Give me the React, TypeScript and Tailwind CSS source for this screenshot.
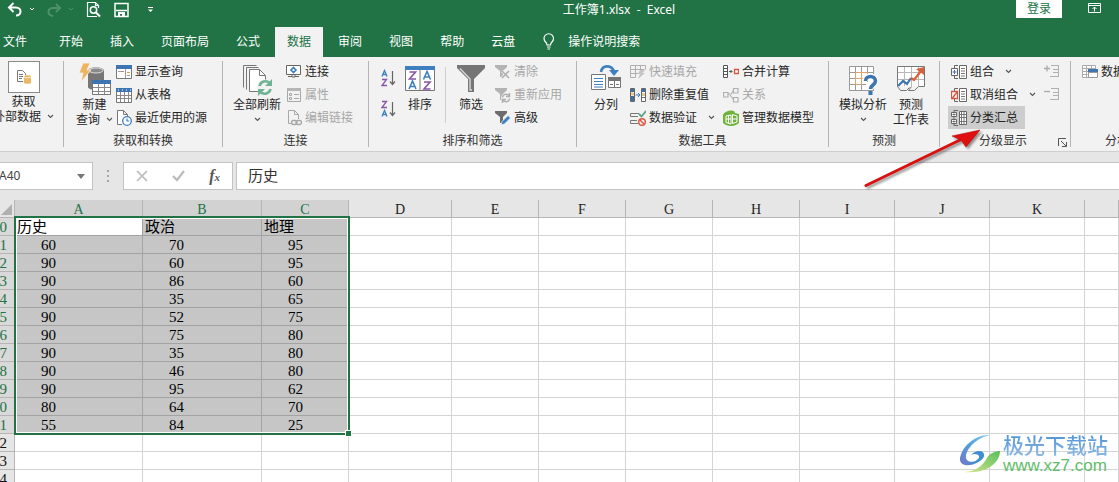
import type { ReactNode } from "react";

const FONT = "font-['Noto_Sans','Noto_Sans_CJK_SC',sans-serif]";

const TABS = ["文件", "开始", "插入", "页面布局", "公式", "数据", "审阅", "视图", "帮助", "云盘"];

const COLUMNS = ["A", "B", "C", "D", "E", "F", "G", "H", "I", "J", "K", "L"];
const COLUMN_WIDTHS = [
  "w-[128px]",
  "w-[119px]",
  "w-[87px]",
  "w-[103px]",
  "w-[87px]",
  "w-[87px]",
  "w-[87px]",
  "w-[87px]",
  "w-[95px]",
  "w-[95px]",
  "w-[95px]",
  "",
];

const FIRST_ROW = 40;
const ROWS: string[][] = [
  ["历史", "政治", "地理"],
  ["60", "70", "95"],
  ["90", "60", "95"],
  ["90", "86", "60"],
  ["90", "35", "65"],
  ["90", "52", "75"],
  ["90", "75", "80"],
  ["90", "35", "80"],
  ["90", "46", "80"],
  ["90", "95", "62"],
  ["80", "64", "70"],
  ["55", "84", "25"],
  [],
  [],
  [],
];
const SELECTED_ROWS = 12;
const SELECTED_COLS = 3;

function Svg({ w = 16, h = 16, children }: { w?: number; h?: number; children: ReactNode }) {
  return (
    <svg width={w} height={h} viewBox={`0 0 ${w} ${h}`} fill="none" className="shrink-0" aria-hidden="true">
      {children}
    </svg>
  );
}

function Chevron() {
  return (
    <Svg w={7} h={5}>
      <path d="M1 1l2.5 2.5L6 1" stroke="#555" strokeWidth="1.1" />
    </Svg>
  );
}

/* ---------- small ribbon icons ---------- */

const ShowQueriesIcon = () => (
  <Svg>
    <path d="M.5 1.5h15v13H.5z" fill="#fff" stroke="#777" />
    <path d="M0 1h16v4H0z" fill="#3e74b0" />
    <path d="M9.5 5v9M2 7.5h6M11 11.5h3" stroke="#999" />
    <path d="M11 8.5h3" stroke="#e0a04a" />
  </Svg>
);

const FromTableIcon = () => (
  <Svg>
    <path d="M.5 1.5h15v14H.5z" fill="#fff" stroke="#777" />
    <path d="M0 1h16v4H0z" fill="#3e74b0" />
    <path d="M2 3h1M6 3h1M10 3h1M14 3h1" stroke="#fff" />
    <path d="M4.5 5v10M8.5 5v10M12.5 5v10M1 8.5h14M1 11.5h14" stroke="#888" />
  </Svg>
);

const RecentIcon = () => (
  <Svg>
    <path d="M6 14.5H1.5V.5h6l4 4V7M7.5.5v4h4" fill="#fff" stroke="#777" />
    <circle cx="11" cy="11" r="4.3" fill="#fff" stroke="#3e7fc0" strokeWidth="1.3" />
    <path d="M11 8.5V11h2.3" stroke="#3e7fc0" strokeWidth="1.2" />
  </Svg>
);

const ConnectionIcon = () => (
  <Svg>
    <path d="M.5 1.5h14v9H.5z" fill="#fff" stroke="#666" />
    <path d="M2 12.5h4M9 12.5h4M6 11v2h3v-2" stroke="#666" />
    <path d="M7.5 3.5l2.5 2.5-2.5 2.5L5 6z" stroke="#3e7fc0" strokeWidth="1.6" />
  </Svg>
);

const PropertiesIcon = () => (
  <Svg>
    <path d="M1.5 1.5h13v13h-13z" stroke="#a8a8a8" />
    <path d="M1 1h14v3H1z" fill="#b5b5b5" />
    <path d="M8 7.5h5M8 11.5h5M3.5 6.5h2v2h-2zM3.5 10.5h2v2h-2z" stroke="#a8a8a8" />
  </Svg>
);

const EditLinksIcon = () => (
  <Svg>
    <path d="M5 13.5H2.5v-13h6l4 4V9M8.5.5v4h4" stroke="#a8a8a8" />
    <rect x="5.5" y="10.5" width="5.5" height="4" rx="2" stroke="#a8a8a8" strokeWidth="1.4" />
    <rect x="10" y="10.5" width="5.5" height="4" rx="2" stroke="#a8a8a8" strokeWidth="1.4" />
  </Svg>
);

const ClearFilterIcon = () => (
  <Svg>
    <path d="M0 1h12v2L8 7v6H5V7L0 3z" fill="#b3b3b3" />
    <path d="M7 7l7 7M14 7l-7 7" stroke="#f2f2f2" strokeWidth="3" />
    <path d="M7 7l7 7M14 7l-7 7" stroke="#adadad" strokeWidth="1.5" />
  </Svg>
);

const ReapplyIcon = () => (
  <Svg>
    <path d="M0 1h12v2L8 7v6H5V7L0 3z" fill="#b3b3b3" />
    <circle cx="11" cy="11" r="5" fill="#f2f2f2" />
    <path
      d="M7.5 10.5a3.5 3.5 0 0 1 6.5-1.500M14.5 11.5a3.5 3.5 0 0 1-6.5 1.500M14.5 6v3.500h-3.500M7.5 16v-3.500h3.500"
      stroke="#adadad"
      strokeWidth="1.4"
    />
  </Svg>
);

const AdvancedIcon = () => (
  <Svg>
    <path d="M0 1h12v2L8 7v6H5V7L0 3z" fill="#6c6c6c" />
    <path d="M13 5.5l2.500 2.500-6 6-3.500 1 1-3.500z" fill="#3e7fc0" stroke="#f2f2f2" strokeWidth=".8" />
  </Svg>
);

const FlashFillIcon = () => (
  <Svg>
    <path d="M.5 1.5h15v4M.5 1.5v12h5M.5 5.5h14M.5 9.5h8M5.5 1.5v12M10.5 1.5v5" stroke="#b0b0b0" />
    <path d="M10 6h5l-2.500 3H15l-7 6 2-5H8z" fill="#c4c4c4" />
  </Svg>
);

const RemoveDuplicatesIcon = () => (
  <Svg>
    <path d="M.5 1.5h4v13h-4zM11.5 1.5h4v13h-4z" fill="#fff" stroke="#666" />
    <path d="M1 2h3v3H1zM1 9h3v5H1zM12 2h3v3h-3z" fill="#3e6f9e" />
    <path d="M1 5.5h3v3H1zM12 6h3v3h-3z" fill="#e5c88f" />
    <path d="M11 10.5h5" stroke="#666" />
    <path d="M5.5 8h4M8 6l2 2-2 2" stroke="#3e7fc0" />
  </Svg>
);

const ValidationIcon = () => (
  <Svg>
    <path d="M9 3.5H.5v3H8M7 10.5H.5v3H8" stroke="#777" />
    <path d="M9 4l2.500 2.500L16 1" stroke="#5b9f86" strokeWidth="1.8" />
    <circle cx="12" cy="12" r="3.3" stroke="#d9553f" strokeWidth="1.4" />
    <path d="M9.8 9.8l4.4 4.4" stroke="#d9553f" strokeWidth="1.4" />
  </Svg>
);

const ConsolidateIcon = () => (
  <Svg>
    <path d="M.5 1.5h4v12h-4zM.5 4.5h4M.5 7.5h4M.5 10.5h4" fill="#fff" stroke="#555" />
    <path d="M6 7.5h3M7.5 6L9 7.5 7.500 9" stroke="#555" />
    <path d="M11.5 5.5h4v4h-4z" fill="#fff" stroke="#d9553f" strokeWidth="1.3" />
  </Svg>
);

const RelationsIcon = () => (
  <Svg>
    <path
      d="M.5 5.5h4.500v4.500H.5zM10.5 1.5H15V6h-4.500zM10.5 10.5H15V15h-4.500zM5 7h3l2.500-3.500M7 8l3.500 4.500"
      stroke="#b0b0b0"
      strokeWidth="1.2"
    />
  </Svg>
);

const DataModelIcon = () => (
  <Svg>
    <path d="M0 4.500C2 2 5 .5 8 .5s4 1 4 2.500l4 1v9c-2 2-5 3-8 3s-6-1-8-3z" fill="#70b33c" />
    <path d="M3 6l5-1v9l-5-1.500zM3 9h5M5.500 5.500v8M9.500 4.500L14 6v6l-4.500 1.500zM9.500 9H14" stroke="#fff" />
  </Svg>
);

const GroupIcon = () => (
  <Svg>
    <path d="M7 1.500H3.500V4M7 14.500H3.500V12" stroke="#666" />
    <path d="M.5 4.500h6v7h-6z" fill="#fff" stroke="#666" />
    <path d="M1.500 8h4M3.500 6v4" stroke="#3e74b0" />
    <path d="M8.500 1.500h7v13h-7z" fill="#fff" stroke="#666" />
    <path d="M10 4.500h4M10 7h4M10 9.500h4M10 12h4" stroke="#777" />
  </Svg>
);

const UngroupIcon = () => (
  <Svg>
    <path d="M7 1.500H3.500V4M7 14.500H3.500V12" stroke="#666" />
    <path d="M.5 4.500h6v7h-6z" fill="#fff" stroke="#d9553f" strokeWidth="1.3" />
    <path d="M1.500 11L6 5" stroke="#d9553f" strokeWidth="1.4" />
    <path d="M8.500 1.500h7v13h-7z" fill="#fff" stroke="#666" />
    <path d="M10 4.500h4M10 7h4M10 9.500h4M10 12h4" stroke="#777" />
  </Svg>
);

const SubtotalIcon = () => (
  <Svg>
    <path d="M.5 2.500h5v4h-5zM.5 9.500h5v4h-5z" fill="#fff" stroke="#666" />
    <path d="M1.500 4.500h3M3 3.500v2M1.500 11.500h3M3 10.500v2M3 2V.5h4M3 7v2M3 14v1.500h4" stroke="#666" />
    <path d="M8.500 1.500h7v13h-7z" fill="#fff" stroke="#666" />
    <path d="M10.500 2v12M13 2v12M9 4.500h6M9 7.500h6M9 11.500h6" stroke="#777" />
  </Svg>
);

const DetailIcon = ({ plus = false }: { plus?: boolean }) => (
  <Svg>
    <path d={plus ? "M0 4.500h6M3 1.500v6" : "M0 4.500h6"} stroke="#aaa" strokeWidth="1.3" />
    <path d="M7 1.500h8M9 5.500h6M9 8.500h6M6 12.500h9M14.500 1v12" stroke="#b0b0b0" />
  </Svg>
);

const AnalysisIcon = () => (
  <Svg>
    <path d="M.5 1.500h13v12H.5zM.5 4.500h13M.5 7.500h13M.5 10.500h5M4.500 1.500v12M9.500 1.500v3" fill="#fff" stroke="#aaa" />
    <path d="M6 5h10v4H6z" fill="#3e74b0" />
    <path d="M6.500 8.500h9v5h-9z" fill="#fff" stroke="#999" />
  </Svg>
);

/* ---------- large ribbon icons ---------- */

const ExternalDataIcon = () => (
  <span className="flex size-8 items-center justify-center border border-[#8a8a8a] bg-white">
    <Svg>
      <path d="M7 12.500H1.500v-11h5l3 3V6M3 5.500h4M3 7.500h4M3 9.500h3" stroke="#777" />
      <path d="M8 7c0-1 7-1 7 0v7c0 1-7 1-7 0z" fill="#eab765" />
      <path d="M8 8c1 1 6 1 7 0" stroke="#fff" strokeWidth=".8" />
    </Svg>
  </span>
);

const NewQueryIcon = () => (
  <Svg w={34} h={34}>
    <path d="M10 8c0-5 16-5 16 0v16c0 4-16 4-16 0z" fill="#777" />
    <ellipse cx="18" cy="7.500" rx="7" ry="2.500" fill="#8b8b8b" stroke="#f2f2f2" strokeWidth=".8" />
    <path d="M5 0h7L9 7h4L3 19l2-9H1z" fill="#efb45f" stroke="#f2f2f2" strokeWidth=".8" />
    <path d="M14.500 17.500h18v14h-18z" fill="#fff" stroke="#777" />
    <path d="M14 17h19v4H14z" fill="#3e74b0" />
    <path d="M20.500 21v10M26.500 21v10M15 24.500h17M15 28.500h17" stroke="#888" />
  </Svg>
);

const RefreshAllIcon = () => (
  <Svg w={32} h={32}>
    <path d="M2.500 23.500V1.500h13M5.500 25.500V3.500h12" stroke="#777" />
    <path d="M8.500 5.500h10l6 6v16h-16z" fill="#fff" stroke="#777" />
    <path d="M18.500 5.500v6h6" stroke="#777" />
    <circle cx="24" cy="23.500" r="8" fill="#f2f2f2" />
    <path d="M18.500 22a6 6 0 0 1 10-3M29.500 25a6 6 0 0 1-10 3" stroke="#6fb295" strokeWidth="2.6" />
    <path d="M31 15v7h-7zM17 32v-7h7z" fill="#6fb295" />
  </Svg>
);

const SortIcon = () => (
  <Svg w={30} h={32}>
    <path d="M.5 2.500h29v24H.5z" fill="#fff" stroke="#777" />
    <path d="M0 2h30v4H0z" fill="#3e7fc0" />
    <path d="M15 6v20" stroke="#777" />
    <path d="M4.500 8h6l-6 7h6.500" stroke="#8a55a5" strokeWidth="1.6" />
    <path d="M4 25l3.500-8 3.500 8M5 22.500h5" stroke="#3e7fc0" strokeWidth="1.6" />
    <path d="M18.500 15.500l3.500-8 3.500 8M19.500 13h5" stroke="#3e7fc0" strokeWidth="1.6" />
    <path d="M19 18h6l-6 7h6.500" stroke="#8a55a5" strokeWidth="1.6" />
  </Svg>
);

const SortOrderIcon = ({ desc = false }: { desc?: boolean }) => (
  <Svg w={15} h={18}>
    <g transform={desc ? "translate(0 9)" : undefined}>
      <path d="M1 7.500L3.500 1.500 6 7.500M2 5.500h3" stroke="#3e7fc0" strokeWidth="1.3" />
    </g>
    <g transform={desc ? "translate(0 -9)" : undefined}>
      <path d="M1 10.500h4.500L1 16.500h5" stroke="#8a55a5" strokeWidth="1.3" />
    </g>
    <path d="M11.500 2v13M9 12.500l2.500 3 2.500-3" stroke="#666" strokeWidth="1.2" />
  </Svg>
);

const FilterIcon = () => (
  <Svg w={28} h={32}>
    <path d="M0 1h28v3L17 15v13h-6V15L0 4z" fill="#757575" />
    <path d="M3 4.500l10 10.500v11h2" stroke="#d8d8d8" strokeWidth="1.4" />
  </Svg>
);

const TextToColumnsIcon = () => (
  <Svg w={30} h={32}>
    <path d="M10 8C11 1 21 0 23 8" stroke="#3e7fc0" strokeWidth="2.6" />
    <path d="M18 6h10l-5 6z" fill="#3e7fc0" />
    <path d="M.5 10.500h14v15H.5z" fill="#fff" stroke="#777" />
    <path d="M3 14.500h9M3 17.500h9M3 20.500h9M3 23h9" stroke="#3e7fc0" />
    <path d="M17.500 13.500h12v10h-12z" fill="#fff" stroke="#777" />
    <path d="M17 13h13v4H17z" fill="#757575" />
    <path d="M23.500 17v6M19 20.500h3M25 20.500h3" stroke="#777" />
  </Svg>
);

const WhatIfIcon = () => (
  <Svg w={30} h={32}>
    <path
      d="M1.500 2.500h24v24h-24zM7.500 2v25M13.500 2v25M19.500 2v16M1 8.500h25M1 14.500h19M1 20.500h17"
      fill="#fff"
      stroke="#999"
    />
    <path d="M7.500 8.500h6v6h-6zM7.500 14.500h6v6h-6zM13.500 8.500h6v6h-6z" stroke="#e3a567" />
    <path d="M17.500 17c0-6 10-6 10 0 0 4-5 4-5 8" stroke="#fff" strokeWidth="6" />
    <path d="M17.500 17c0-6 10-6 10 0 0 4-5 4-5 8" stroke="#3e74b0" strokeWidth="3.6" />
    <path d="M20.500 27h4v4h-4z" fill="#3e74b0" />
  </Svg>
);

const ForecastIcon = () => (
  <Svg w={30} h={32}>
    <path d="M1.500 2.500h27v20h-27z" fill="#fff" />
    <path d="M8.500 2v20M15.500 2v20M22.500 2v20M1 8.500h28M1 15.500h28" stroke="#b8b8b8" />
    <path d="M1.500 2.500v20l3 4h6l3-3M28.500 2.500v20h-6l-4 4h-6l3-4M1.500 2.500h27" stroke="#777" />
    <path d="M2 22l5-5 4 3 4-6" stroke="#3e74b0" strokeWidth="2.2" />
    <path d="M15 14l3 2 7-9" stroke="#d9603b" strokeWidth="2.2" />
    <path d="M20 5l8-2v8z" fill="#d9603b" />
  </Svg>
);

/* ---------- ribbon building blocks ---------- */

type SmallButtonProps = {
  icon: ReactNode;
  label: string;
  arrow?: boolean;
  disabled?: boolean;
  active?: boolean;
};

function SmallButton({ icon, label, arrow, disabled, active }: SmallButtonProps) {
  return (
    <button
      type="button"
      disabled={disabled}
      className={`flex h-[23px] items-center gap-[3px] px-[3px] text-[12px] leading-4 whitespace-nowrap ${
        disabled ? "text-[#a6a6a6]" : "text-[#262626]"
      } ${active ? "bg-[#cdcdcd] pr-[7px]" : ""}`}
    >
      {icon}
      {label}
      {arrow && (
        <span className="ml-2">
          <Chevron />
        </span>
      )}
    </button>
  );
}

type LargeButtonProps = {
  icon: ReactNode;
  lines: string[];
  arrow?: "beside" | "below";
  className?: string;
};

function LargeButton({ icon, lines, arrow, className = "pt-1" }: LargeButtonProps) {
  const last = lines.length - 1;
  return (
    <button
      type="button"
      className={`flex shrink-0 flex-col items-center text-[12px] leading-[15px] whitespace-nowrap text-[#262626] ${className}`}
    >
      <span className="mb-px flex h-8 items-center justify-center">{icon}</span>
      {lines.map((line, i) => (
        <span key={line} className="flex h-[15px] items-center gap-[6px]">
          {line}
          {arrow === "beside" && i === last && <Chevron />}
        </span>
      ))}
      {arrow === "below" && (
        <span className="flex h-[15px] items-center">
          <Chevron />
        </span>
      )}
    </button>
  );
}

type GroupProps = {
  label: string;
  width: string;
  launcher?: boolean;
  children: ReactNode;
};

function Group({ label, width, launcher, children }: GroupProps) {
  return (
    <>
      <section aria-label={label || undefined} className={`flex shrink-0 flex-col pt-[3px] ${width}`}>
        <div className="flex h-[70px]">{children}</div>
        <div className="flex h-[21px] items-center text-[12px] leading-4 whitespace-nowrap text-[#333]">
          <span className={`flex-1 text-center ${launcher ? "pl-2" : ""}`}>{label}</span>
          {launcher && (
            <button type="button" aria-label={`${label}设置`} className="mt-1 mr-[3px]">
              <Svg w={9} h={9}>
                <path d="M.5 8V.5H8M3 3l5 5M8.500 4v4.500H4" stroke="#555" />
              </Svg>
            </button>
          )}
        </div>
      </section>
      <div className="my-1 w-px shrink-0 bg-[#b5b5b5]" />
    </>
  );
}

function TitleBar() {
  return (
    <header className="flex h-[27px] items-start text-[12px] leading-[18px] text-white">
      <div className="flex h-[19px] items-center pl-[7px]">
        <button type="button" aria-label="撤消">
          <Svg w={16} h={15}>
            <path d="M2 5.500h7c6 0 6 8 0 8M6.500 1L2 5.500 6.500 10" stroke="#fff" strokeWidth="2" />
          </Svg>
        </button>
        <button type="button" aria-label="撤消选项" className="ml-[6px]">
          <Svg w={6} h={5}>
            <path d="M1 1l2 2 2-2" stroke="#fff" />
          </Svg>
        </button>
        <button type="button" disabled aria-label="恢复" className="ml-3">
          <Svg w={15} h={14}>
            <path d="M13 5H6c-6 0-6 7 0 8M9 1l4 4-4 4" stroke="#4d9069" strokeWidth="2" />
          </Svg>
        </button>
        <button type="button" disabled aria-label="恢复选项" className="ml-[6px]">
          <Svg w={6} h={5}>
            <path d="M1 1l2 2 2-2" stroke="#4d9069" />
          </Svg>
        </button>
        <button type="button" aria-label="打印预览" className="ml-3">
          <Svg w={16} h={17}>
            <path d="M11 15.500H1.500V1.500h8l3 3V7M9.500 1.500v3h3" stroke="#fff" strokeWidth="1.2" />
            <circle cx="7.500" cy="9" r="3.200" stroke="#fff" strokeWidth="1.5" />
            <path d="M10 11.500l4 4" stroke="#fff" strokeWidth="2" />
          </Svg>
        </button>
        <button type="button" aria-label="保存" className="ml-3">
          <Svg w={15} h={16}>
            <path d="M1 1.500h13v13H1z" stroke="#fff" strokeWidth="1.5" />
            <path d="M2 8.500h11" stroke="#fff" strokeWidth="1.5" />
            <path d="M4 10h7v5H8v-3H6v3H4z" fill="#fff" />
          </Svg>
        </button>
        <button type="button" aria-label="自定义快速访问工具栏" className="ml-[18px]">
          <Svg w={7} h={7}>
            <path d="M1 1.500h5" stroke="#fff" />
            <path d="M1 3.500h5L3.500 6z" fill="#fff" />
          </Svg>
        </button>
      </div>
      <h1 className="flex-1 pt-px pl-[68px] text-center whitespace-pre">{"工作簿1.xlsx  -  Excel"}</h1>
      <button type="button" className="h-[18px] bg-white px-[11px] text-[#217346]">
        登录
      </button>
      <button type="button" aria-label="功能区显示选项" className="mt-[2px] mr-[17px] ml-[25px]">
        <Svg w={15} h={12}>
          <path d="M1.500 1.500h12v9h-12zM1 3.500h13M7.500 9.500V5M5.500 7l2-2 2 2" stroke="#fff" />
        </Svg>
      </button>
    </header>
  );
}

function TabBar() {
  return (
    <nav className="flex h-[30px] items-stretch gap-[3px] text-[12px] leading-4 whitespace-nowrap text-white">
      {TABS.map((tab) => (
        <button
          key={tab}
          type="button"
          className={`pb-px ${tab === "文件" ? "mr-[5px] pr-3 pl-[3px]" : "px-3"} ${
            tab === "数据" ? "bg-[#f2f2f2] text-[#217346]" : ""
          }`}
        >
          {tab}
        </button>
      ))}
      <button type="button" className="flex items-center gap-3 px-3 pb-px">
        <Svg w={14} h={17}>
          <path
            d="M5 12c0-3-3-3-3-6.500a4.700 4.700 0 0 1 9.500 0C11.500 9 8.500 9 8.500 12zM5 14h3.500M5.500 16h2.500"
            stroke="#fff"
            strokeWidth="1.2"
          />
        </Svg>
        操作说明搜索
      </button>
    </nav>
  );
}

function Ribbon() {
  return (
    <div className="flex overflow-hidden border-b border-[#cfcfcf] bg-[#f2f2f2]">
      <Group label="" width="w-[63px]">
        <LargeButton icon={<ExternalDataIcon />} lines={["获取", "外部数据"]} arrow="beside" className="-ml-2 w-[63px] pt-px" />
      </Group>

      <Group label="获取和转换" width="w-[158px]">
        <div className="flex pl-3">
          <LargeButton icon={<NewQueryIcon />} lines={["新建", "查询"]} arrow="beside" />
          <div>
            <SmallButton icon={<ShowQueriesIcon />} label="显示查询" />
            <SmallButton icon={<FromTableIcon />} label="从表格" />
            <SmallButton icon={<RecentIcon />} label="最近使用的源" />
          </div>
        </div>
      </Group>

      <Group label="连接" width="w-[145px]">
        <div className="flex pl-[10px]">
          <LargeButton icon={<RefreshAllIcon />} lines={["全部刷新"]} arrow="below" />
          <div className="ml-[2px]">
            <SmallButton icon={<ConnectionIcon />} label="连接" />
            <SmallButton icon={<PropertiesIcon />} label="属性" disabled />
            <SmallButton icon={<EditLinksIcon />} label="编辑链接" disabled />
          </div>
        </div>
      </Group>

      <Group label="排序和筛选" width="w-[207px]">
        <div className="flex pl-3">
          <div className="flex flex-col gap-[13px] pt-[9px]">
            <button type="button" aria-label="升序">
              <SortOrderIcon />
            </button>
            <button type="button" aria-label="降序">
              <SortOrderIcon desc />
            </button>
          </div>
          <LargeButton icon={<SortIcon />} lines={["排序"]} className="ml-[9px] pt-1" />
          <div className="mt-[7px] ml-[10px] h-[56px] w-px bg-[#cfcfcf]" />
          <LargeButton icon={<FilterIcon />} lines={["筛选"]} className="ml-[11px] pt-1" />
          <div className="ml-[7px]">
            <SmallButton icon={<ClearFilterIcon />} label="清除" disabled />
            <SmallButton icon={<ReapplyIcon />} label="重新应用" disabled />
            <SmallButton icon={<AdvancedIcon />} label="高级" />
          </div>
        </div>
      </Group>

      <Group label="数据工具" width="w-[251px]">
        <div className="flex pl-[14px]">
          <LargeButton icon={<TextToColumnsIcon />} lines={["分列"]} />
          <div className="ml-[6px]">
            <SmallButton icon={<FlashFillIcon />} label="快速填充" disabled />
            <SmallButton icon={<RemoveDuplicatesIcon />} label="删除重复值" />
            <SmallButton icon={<ValidationIcon />} label="数据验证" arrow />
          </div>
          <div className="ml-[2px]">
            <SmallButton icon={<ConsolidateIcon />} label="合并计算" />
            <SmallButton icon={<RelationsIcon />} label="关系" disabled />
            <SmallButton icon={<DataModelIcon />} label="管理数据模型" />
          </div>
        </div>
      </Group>

      <Group label="预测" width="w-[110px]">
        <div className="flex gap-[6px] pl-[10px]">
          <LargeButton icon={<WhatIfIcon />} lines={["模拟分析"]} arrow="below" />
          <LargeButton icon={<ForecastIcon />} lines={["预测", "工作表"]} />
        </div>
      </Group>

      <Group label="分级显示" width="w-[130px]" launcher>
        <div className="flex flex-1 justify-between pr-[6px] pl-2">
          <div>
            <SmallButton icon={<GroupIcon />} label="组合" arrow />
            <SmallButton icon={<UngroupIcon />} label="取消组合" arrow />
            <SmallButton icon={<SubtotalIcon />} label="分类汇总" active />
          </div>
          <div>
            <button type="button" disabled aria-label="显示明细数据" className="flex h-[23px] items-center px-1">
              <DetailIcon plus />
            </button>
            <button type="button" disabled aria-label="隐藏明细数据" className="flex h-[23px] items-center px-1">
              <DetailIcon />
            </button>
          </div>
        </div>
      </Group>

      <Group label="分析" width="w-[92px]">
        <div className="pl-2">
          <SmallButton icon={<AnalysisIcon />} label="数据分析" />
        </div>
      </Group>
    </div>
  );
}

function FormulaBar() {
  return (
    <div className="flex h-12 items-start bg-[#e6e6e6] pt-[10px]">
      <div className="flex h-7 w-[93px] shrink-0 items-center border border-l-0 border-[#c3c3c3] bg-white">
        <input aria-label="名称框" defaultValue="A40" className="-ml-px w-[78px] text-[12px] text-[#444] outline-none" />
        <button type="button" aria-label="名称列表">
          <Svg w={8} h={5}>
            <path d="M0 0h8L4 5z" fill="#777" />
          </Svg>
        </button>
      </div>
      <div className="flex h-7 w-[30px] shrink-0 flex-col items-center justify-center gap-[3px]">
        <span className="size-[2px] bg-[#a5a5a5]" />
        <span className="size-[2px] bg-[#a5a5a5]" />
        <span className="size-[2px] bg-[#a5a5a5]" />
      </div>
      <div className="flex h-7 w-[110px] shrink-0 items-center justify-between border border-[#c3c3c3] bg-white px-3">
        <button type="button" aria-label="取消">
          <Svg w={12} h={12}>
            <path d="M1 1l10 10M11 1L1 11" stroke="#bbb" strokeWidth="1.7" />
          </Svg>
        </button>
        <button type="button" aria-label="输入">
          <Svg w={13} h={12}>
            <path d="M1 6l4 4 7-9" stroke="#bbb" strokeWidth="2.2" />
          </Svg>
        </button>
        <button
          type="button"
          aria-label="插入函数"
          className="font-['Liberation_Serif',serif] text-[16px] leading-5 font-bold text-[#555] italic"
        >
          f<span className="text-[11px]">x</span>
        </button>
      </div>
      <input
        aria-label="编辑栏"
        defaultValue="历史"
        className="ml-[3px] h-7 min-w-0 flex-1 border border-r-0 border-[#c3c3c3] bg-white pb-1 pl-[11px] text-[15px] text-[#333] outline-none"
      />
    </div>
  );
}

function cellStyle(row: number, col: number) {
  if (row < SELECTED_ROWS && col < SELECTED_COLS) {
    return row === 0 && col === 0 ? "bg-white border-[#a3a3a3]" : "bg-[#c6c6c6] border-[#a3a3a3]";
  }
  return "bg-white border-[#d4d4d4]";
}

function Sheet() {
  return (
    <div className="relative">
      <table className="w-full table-fixed border-separate border-spacing-0 text-[15px]">
        <colgroup>
          <col className="w-[15px]" />
          {COLUMNS.map((name, i) => (
            <col key={name} className={COLUMN_WIDTHS[i]} />
          ))}
        </colgroup>
        <thead>
          <tr>
            <th aria-label="全选" className="h-[18px] border-r border-b border-[#b5b5b5] bg-[#e6e6e6] p-0">
              <Svg w={13} h={15}>
                <path d="M12 3v11H1z" fill="#b0b0b0" />
              </Svg>
            </th>
            {COLUMNS.map((name, col) => (
              <th
                key={name}
                scope="col"
                className={`h-[18px] overflow-hidden border-r border-b border-[#b5b5b5] p-0 pt-[3px] font-['Liberation_Serif',serif] text-[14px] leading-[14px] font-normal ${
                  col < SELECTED_COLS ? "bg-[#d2d2d2] text-[#217346]" : "bg-[#e6e6e6] text-[#222]"
                }`}
              >
                {name === "L" ? "" : name}
              </th>
            ))}
          </tr>
        </thead>
        <tbody className="font-['Liberation_Serif','Noto_Sans_CJK_SC',serif]">
          {ROWS.map((values, row) => (
            <tr key={row}>
              <th
                scope="row"
                className={`h-[18px] overflow-hidden border-r border-b border-[#b5b5b5] p-0 font-normal ${
                  row < SELECTED_ROWS ? "bg-[#d9d9d9] text-[#217346]" : "bg-[#e6e6e6] text-[#111]"
                }`}
              >
                <span className="flex h-[17px] justify-end pt-[2px] pr-[7px] leading-[15px]">{FIRST_ROW + row}</span>
              </th>
              {COLUMNS.map((name, col) => (
                <td
                  key={name}
                  className={`h-[18px] border-r border-b p-0 pt-[2px] leading-[15px] text-black ${
                    row === 0 ? "pl-[2px]" : "pl-[26px]"
                  } ${cellStyle(row, col)}`}
                >
                  {values[col]}
                </td>
              ))}
            </tr>
          ))}
        </tbody>
      </table>

      {/* selection frame with its fill handle */}
      <div className="pointer-events-none absolute top-[16px] left-[14px] h-[219px] w-[336px] border-2 border-[#217346]">
        <div className="h-full border border-white" />
        <div className="absolute -right-[4px] -bottom-[4px] size-[7px] border border-white bg-[#217346]" />
      </div>
    </div>
  );
}

function Watermark() {
  return (
    <div className="pointer-events-none absolute right-[11px] bottom-2 flex items-center gap-[2px]">
      <svg width="42" height="40" viewBox="0 0 42 40" fill="none" aria-hidden="true">
        <defs>
          <linearGradient id="swirl-blue" x1="0" y1="1" x2="1" y2="0">
            <stop offset="0" stopColor="#7478c8" />
            <stop offset=".5" stopColor="#4f9fdc" />
            <stop offset="1" stopColor="#8fd0f2" />
          </linearGradient>
          <linearGradient id="swirl-green" x1="0" y1="1" x2="1" y2="0">
            <stop offset="0" stopColor="#d5e58a" />
            <stop offset="1" stopColor="#58bf5c" />
          </linearGradient>
        </defs>
        <path d="M31 1C16 0 1 14 1 26c1 8 17 7 24-4-7 7-18 8-18 1C7 14 18 4 31 1z" fill="url(#swirl-blue)" />
        <path d="M12 21c5-6 14-5 13 1-1 5-10 9-18 8 8-1 14-5 13-8-1-2-5-3-8-1z" fill="#3f8fd2" />
        <path d="M41 17c0 12-14 23-35 21 12-1 18-7 22-14 3-5 8-7 13-7z" fill="url(#swirl-green)" />
      </svg>
      <div className="flex flex-col gap-px">
        <span className="bg-gradient-to-b from-[#4a92d6] to-[#8fb9e4] bg-clip-text text-[21px] leading-6 font-medium whitespace-nowrap text-transparent">
          极光下载站
        </span>
        <span className="font-['Liberation_Sans',sans-serif] text-[17px] leading-4 text-[#5fbd68]">www.xz7.com</span>
      </div>
    </div>
  );
}

function PointerArrow() {
  return (
    <svg
      width="120"
      height="64"
      viewBox="0 0 120 64"
      fill="none"
      aria-hidden="true"
      className="pointer-events-none absolute top-[126px] left-[862px] drop-shadow-[2px_2px_1px_rgba(0,0,0,0.4)]"
    >
      <path d="M4 59.500L98 14" stroke="#d81010" strokeWidth="3" strokeLinecap="round" />
      <path d="M118 4l-14 17-5-7-9-4z" fill="#e01010" stroke="#b80c0c" strokeWidth=".6" />
    </svg>
  );
}

export default function App() {
  return (
    <div className={`relative h-screen overflow-hidden bg-white ${FONT}`}>
      <div className="bg-[#217346]">
        <TitleBar />
        <TabBar />
      </div>
      <Ribbon />
      <FormulaBar />
      <Sheet />
      <Watermark />
      <PointerArrow />
    </div>
  );
}
